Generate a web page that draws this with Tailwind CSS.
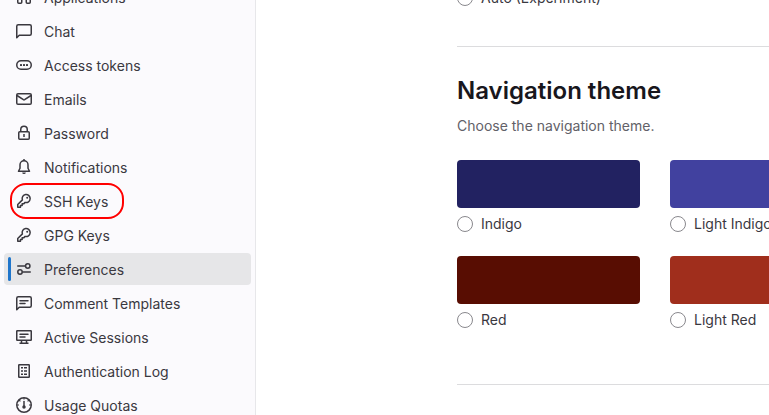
<!DOCTYPE html>
<html lang="en">
<head>
<meta charset="utf-8">
<meta name="viewport" content="width=device-width, initial-scale=1">
<title>Preferences</title>
<script src="https://cdn.jsdelivr.net/npm/@tailwindcss/browser@4"></script>
</head>
<body class="flex h-screen overflow-hidden bg-white font-['Inter','Noto_Sans',sans-serif] text-sm leading-4 text-[#3a383f]">
<aside class="w-64 shrink-0 overflow-hidden border-r border-[#e7e7ea] bg-[#fbfafd]">
<nav aria-label="User settings">
<ul class="-mt-5 flex flex-col gap-0.5 pt-px pr-1 pl-1">
<li><a href="#" class="flex h-8 items-center gap-3 rounded px-3">
<svg class="size-4 shrink-0" viewBox="0 0 16 16" fill="none" stroke="currentColor" stroke-width="1.5" aria-hidden="true"><rect x="1.75" y="1.75" width="4" height="4" rx="1"/><rect x="10.25" y="1.75" width="4" height="4" rx="1"/><rect x="1.75" y="9.25" width="4" height="5" rx="1"/><rect x="10.25" y="9.25" width="4" height="5" rx="1"/></svg>
<span class="pt-0.5">Applications</span></a></li>
<li><a href="#" class="flex h-8 items-center gap-3 rounded px-3">
<svg class="size-4 shrink-0" viewBox="0 0 16 16" fill="none" stroke="currentColor" stroke-width="1.5" stroke-linejoin="round" aria-hidden="true"><path d="M.75 14.75V3.25c0-.83.67-1.5 1.5-1.5h11.5c.83 0 1.5.67 1.5 1.5v7.5c0 .83-.67 1.5-1.5 1.5H3.25z"/></svg>
<span class="pt-0.5">Chat</span></a></li>
<li><a href="#" class="flex h-8 items-center gap-3 rounded px-3">
<svg class="size-4 shrink-0" viewBox="0 0 16 16" fill="none" stroke="currentColor" stroke-width="1.5" aria-hidden="true"><rect x=".75" y="3.75" width="14.5" height="8.5" rx="4.25"/><g fill="currentColor" stroke="none"><rect x="4" y="7" width="2" height="2" rx=".5"/><rect x="7" y="7" width="2" height="2" rx=".5"/><rect x="10" y="7" width="2" height="2" rx=".5"/></g></svg>
<span class="pt-0.5">Access tokens</span></a></li>
<li><a href="#" class="flex h-8 items-center gap-3 rounded px-3">
<svg class="size-4 shrink-0" viewBox="0 0 16 16" fill="none" stroke="currentColor" stroke-width="1.5" aria-hidden="true"><rect x=".75" y="2.75" width="14.5" height="10.5" rx="1.25"/><path d="M1 4.5l6.4 4.2c.4.25.8.25 1.2 0L15 4.5"/></svg>
<span class="pt-0.5">Emails</span></a></li>
<li><a href="#" class="flex h-8 items-center gap-3 rounded px-3">
<svg class="size-4 shrink-0" viewBox="0 0 16 16" fill="none" stroke="currentColor" stroke-width="1.5" aria-hidden="true"><rect x="2.75" y="6.75" width="10.5" height="7.5" rx="1"/><path d="M4.75 6.75V4.5a3.25 3.25 0 0 1 6.5 0v2.25M8 9v3"/></svg>
<span class="pt-0.5">Password</span></a></li>
<li><a href="#" class="flex h-8 items-center gap-3 rounded px-3">
<svg class="size-4 shrink-0" viewBox="0 0 16 16" fill="none" stroke="currentColor" stroke-width="1.5" stroke-linejoin="round" aria-hidden="true"><path d="M8 1.75c-2.3 0-4 1.8-4 4v3.5L2.5 12.25h11L12 9.25v-3.5c0-2.2-1.7-4-4-4z"/><path d="M8 0v2"/><path d="M6.2 13.5h3.6a1.8 1.5 0 0 1-3.6 0z" fill="currentColor" stroke="none"/></svg>
<span class="pt-0.5">Notifications</span></a></li>
<li class="relative"><a href="#" class="flex h-8 items-center gap-3 rounded px-3">
<svg class="size-4 shrink-0" viewBox="0 0 16 16" fill="none" stroke="currentColor" stroke-width="1.5" stroke-linejoin="round" aria-hidden="true"><path d="M6.4 6.9 1.75 11.55v2.7h2.7v-1.7h1.7v-1.7h1.5L9.1 9.4a4 4 0 1 0-2.7-2.5z"/><circle cx="11.2" cy="4.8" r="1" fill="currentColor" stroke="none"/></svg>
<span class="pt-0.5">SSH Keys</span></a>
<div class="pointer-events-none absolute -inset-y-0.5 left-1.5 w-[114px] rounded-2xl border-2 border-[#ff0000]" aria-hidden="true"></div></li>
<li><a href="#" class="flex h-8 items-center gap-3 rounded px-3">
<svg class="size-4 shrink-0" viewBox="0 0 16 16" fill="none" stroke="currentColor" stroke-width="1.5" stroke-linejoin="round" aria-hidden="true"><path d="M6.4 6.9 1.75 11.55v2.7h2.7v-1.7h1.7v-1.7h1.5L9.1 9.4a4 4 0 1 0-2.7-2.5z"/><circle cx="11.2" cy="4.8" r="1" fill="currentColor" stroke="none"/></svg>
<span class="pt-0.5">GPG Keys</span></a></li>
<li class="relative"><a href="#" aria-current="page" class="flex h-8 items-center gap-3 rounded bg-[#e6e6e8] px-3">
<span class="absolute inset-y-1 left-1 w-[3px] rounded-full bg-[#1f75cb]" aria-hidden="true"></span>
<svg class="size-4 shrink-0" viewBox="0 0 16 16" fill="none" stroke="currentColor" stroke-width="1.5" stroke-linecap="round" aria-hidden="true"><path d="M1.75 5h7.5M6.75 11h7.5"/><circle cx="11.75" cy="5" r="2.2"/><circle cx="4" cy="11" r="2.2"/></svg>
<span class="pt-0.5">Preferences</span></a></li>
<li><a href="#" class="flex h-8 items-center gap-3 rounded px-3">
<svg class="size-4 shrink-0" viewBox="0 0 16 16" fill="none" stroke="currentColor" stroke-width="1.5" stroke-linejoin="round" aria-hidden="true"><path d="M.75 14.75V3.25c0-.83.67-1.5 1.5-1.5h11.5c.83 0 1.5.67 1.5 1.5v7.5c0 .83-.67 1.5-1.5 1.5H3.25z"/><path d="M4 5.75h8M4 8.5h5" stroke-linecap="round"/></svg>
<span class="pt-0.5">Comment Templates</span></a></li>
<li><a href="#" class="flex h-8 items-center gap-3 rounded px-3">
<svg class="size-4 shrink-0" viewBox="0 0 16 16" fill="none" stroke="currentColor" stroke-width="1.5" aria-hidden="true"><rect x=".75" y="1.75" width="14.5" height="9.5" rx=".5"/><path d="M4 5.25h8M4 8h5" stroke-linecap="round"/><path d="M5.5 11.5V14M10.5 11.5V14M3.5 14.25h9"/></svg>
<span class="pt-0.5">Active Sessions</span></a></li>
<li><a href="#" class="flex h-8 items-center gap-3 rounded px-3">
<svg class="size-4 shrink-0" viewBox="0 0 16 16" fill="none" stroke="currentColor" stroke-width="1.5" aria-hidden="true"><rect x="2.75" y="1.75" width="10.5" height="12.5" rx=".5"/><path d="M5 4.75h2M8 4.75h3M5 8h2M8 8h3M5 11.25h2M8 11.25h3"/></svg>
<span class="pt-0.5">Authentication Log</span></a></li>
<li><a href="#" class="flex h-8 items-center gap-3 rounded px-3">
<svg class="size-4 shrink-0" viewBox="0 0 16 16" fill="none" stroke="currentColor" stroke-width="1.5" aria-hidden="true"><circle cx="8" cy="8" r="7.25"/><path d="M8 4.5V9" stroke-linecap="round"/><circle cx="8" cy="10" r="1.75" fill="currentColor" stroke="none"/><path d="M8 .75V2.5M1 8h2M13 8h2M3.2 3.2l1.2 1.2M12.8 3.2l-1.2 1.2" stroke-width="1.2"/></svg>
<span class="pt-0.5">Usage Quotas</span></a></li>
</ul>
</nav>
</aside>
<main class="min-w-0 flex-1 overflow-hidden pl-[201px]">
<section class="-mt-2.5 border-b border-[#dcdcde] pb-10">
<label class="flex items-center gap-2 whitespace-nowrap"><input type="radio" name="syntax" class="size-4 shrink-0 appearance-none rounded-full border border-[#89888d] bg-white checked:border-4 checked:border-[#1f75cb]">Auto (Experiment)</label>
</section>
<section class="border-b border-[#dcdcde] pt-7 pb-14">
<h2 class="text-2xl leading-8 font-semibold whitespace-nowrap text-[#18171d]">Navigation theme</h2>
<p class="mt-[11px] leading-4 text-[#626168]">Choose the navigation theme.</p>
<div class="mt-[26px] grid grid-cols-[repeat(2,183px)] gap-x-[30px] gap-y-6">
<label class="flex flex-col gap-2"><span class="h-12 rounded bg-[#222261]"></span><span class="flex items-center gap-2"><input type="radio" name="theme" class="size-4 shrink-0 appearance-none rounded-full border border-[#89888d] bg-white checked:border-4 checked:border-[#1f75cb]">Indigo</span></label>
<label class="flex flex-col gap-2"><span class="h-12 rounded bg-[#41419f]"></span><span class="flex items-center gap-2"><input type="radio" name="theme" class="size-4 shrink-0 appearance-none rounded-full border border-[#89888d] bg-white checked:border-4 checked:border-[#1f75cb]">Light Indigo</span></label>
<label class="flex flex-col gap-2"><span class="h-12 rounded bg-[#580d02]"></span><span class="flex items-center gap-2"><input type="radio" name="theme" class="size-4 shrink-0 appearance-none rounded-full border border-[#89888d] bg-white checked:border-4 checked:border-[#1f75cb]">Red</span></label>
<label class="flex flex-col gap-2"><span class="h-12 rounded bg-[#a02e1c]"></span><span class="flex items-center gap-2"><input type="radio" name="theme" class="size-4 shrink-0 appearance-none rounded-full border border-[#89888d] bg-white checked:border-4 checked:border-[#1f75cb]">Light Red</span></label>
</div>
</section>
</main>
</body>
</html>
